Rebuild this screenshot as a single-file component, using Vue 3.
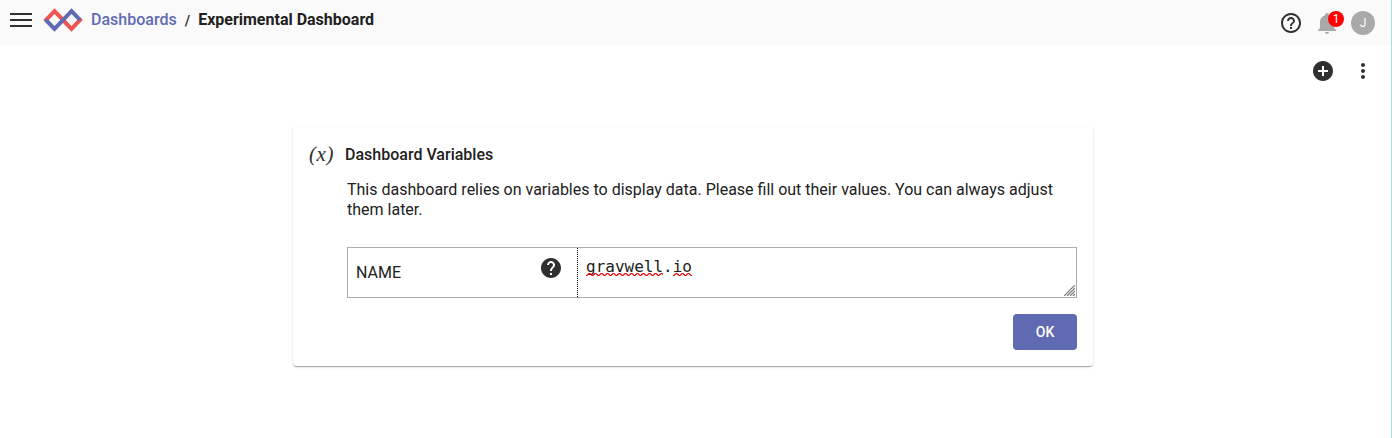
<script setup>
import { ref } from 'vue'
const value = ref('gravwell.io')
const HELP = 'M12 2C6.48 2 2 6.48 2 12s4.48 10 10 10 10-4.48 10-10S17.52 2 12 2zm1 17h-2v-2h2v2zm2.07-7.75l-.9.92C13.45 12.9 13 13.5 13 15h-2v-.5c0-1.1.45-2.1 1.17-2.83l1.24-1.26c.37-.36.59-.86.59-1.41 0-1.1-.9-2-2-2s-2 .9-2 2H8c0-2.21 1.79-4 4-4s4 1.79 4 4c0 .88-.36 1.68-.93 2.25z'
const parts = value.value.split('.')
// spelling underline: a six pixel wave repeated along the word
const wave = (n) => 'M0 2.5h1' + 'l2-2h1l2 2h1'.repeat(n)
</script>

<template>
  <div class="page">
    <header class="topbar">
      <svg class="menu" width="22" height="14" viewBox="0 0 22 14"><path d="M0 0h22v2H0zM0 6h22v2H0zM0 12h22v2H0z" /></svg>
      <svg class="logo" width="40" height="24" viewBox="0 0 40 24">
        <path d="M.2 12L11.5.3 20.5 9.6l-2.8 2.9L11.5 6l-8 8.4zM19.2 14.2l2.9-2.9 6.4 6.7L37 9l2.8 2.9-11.3 11.8z" fill="#f05553" />
        <path d="M1.3 13.2l2.8-2.9 7.4 7.7L28.5.3l9.9 10.1-2.8 2.9L28.5 6l-17 17.7z" fill="#5f6ab3" />
      </svg>
      <nav class="crumbs">
        <a class="link">Dashboards</a><span class="slash">/</span><span class="current">Experimental Dashboard</span>
      </nav>
      <div class="account">
        <svg class="help" width="24" height="24" viewBox="0 0 24 24"><path d="M11 18h2v-2h-2v2zm1-16C6.48 2 2 6.48 2 12s4.48 10 10 10 10-4.48 10-10S17.52 2 12 2zm0 18c-4.41 0-8-3.59-8-8s3.59-8 8-8 8 3.59 8 8-3.59 8-8 8zm0-14c-2.21 0-4 1.79-4 4h2c0-1.1.9-2 2-2s2 .9 2 2c0 2-3 1.75-3 5h2c0-2.25 3-2.5 3-5 0-2.21-1.79-4-4-4z" /></svg>
        <div class="bell">
          <svg width="24" height="24" viewBox="0 0 24 24"><path d="M12 23a2 2 0 0 0 2-2h-4a2 2 0 0 0 2 2zM21 19v1H3v-1l2-2v-6c0-3.1 2.03-5.83 5-6.71V4a2 2 0 0 1 4 0v.29c2.97.88 5 3.61 5 6.71v6l2 2" /></svg>
          <span class="badge">1</span>
        </div>
        <span class="avatar">J</span>
      </div>
    </header>

    <div class="actions">
      <svg width="24" height="24" viewBox="0 0 24 24"><path d="M12 2C6.48 2 2 6.48 2 12s4.48 10 10 10 10-4.48 10-10S17.52 2 12 2zm5 11h-4v4h-2v-4H7v-2h4V7h2v4h4v2z" /></svg>
      <svg width="24" height="24" viewBox="0 0 24 24"><path d="M12 8c1.1 0 2-.9 2-2s-.9-2-2-2-2 .9-2 2 .9 2 2 2zm0 2c-1.1 0-2 .9-2 2s.9 2 2 2 2-.9 2-2-.9-2-2-2zm0 6c-1.1 0-2 .9-2 2s.9 2 2 2 2-.9 2-2-.9-2-2-2z" /></svg>
    </div>

    <section class="card">
      <div class="heading"><span class="fx"><i>(</i><i>x</i><i>)</i></span><h2>Dashboard Variables</h2></div>
      <p>This dashboard relies on variables to display data. Please fill out their values. You can always adjust them later.</p>
      <div class="field">
        <div class="label">
          <span class="name">NAME</span>
          <svg width="24" height="24" viewBox="0 0 24 24"><path :d="HELP" /></svg>
        </div>
        <div class="input">
          <span class="word">{{ parts[0] }}<svg width="77" height="3"><path :d="wave(13)" /></svg></span>.<span class="word">{{ parts[1] }}<svg width="19" height="3"><path :d="wave(4)" /></svg></span>
          <svg class="grip" width="11" height="11" viewBox="0 0 11 11"><path d="M0 11L11 0M3 11l8-8M6 11l5-5M9 11l2-2" /></svg>
        </div>
      </div>
      <button class="ok">OK</button>
    </section>
  </div>
</template>

<style>
body { background: #fff; }
</style>
<style scoped>
.page { box-sizing: border-box; height: 438px; overflow: hidden; border-right: 1px solid #a0e6e0; font: 16px/20px Roboto, sans-serif; color: #212121; background: #fff; }
svg { display: block; flex: none; fill: #303030; }
.topbar { display: flex; height: 45px; background: #fafafa; box-sizing: border-box; padding: 0 16px 0 10px; }
.menu { margin-top: 13px; }
.logo { margin: 8px 0 0 11px; }
.crumbs { display: flex; margin: 10px 0 0 8px; font-weight: 500; }
.link { color: #5f6ab3; }
.slash { margin: 1px 8px 0 8px; font-size: 14px; }
.current { font-weight: 700; }
.account { display: flex; margin: 11px 0 0 auto; gap: 12px; }
.bell { position: relative; }
.bell svg { fill: #a9a9a9; }
.badge { position: absolute; left: 13px; top: 0; width: 16px; height: 16px; border-radius: 50%; background: #f00; color: #fff; font-size: 12px; line-height: 16px; text-align: center; }
.avatar { width: 24px; height: 24px; border-radius: 50%; background: #a9a9a9; color: #fff; font-size: 12px; line-height: 24px; text-align: center; }
.actions { display: flex; justify-content: flex-end; gap: 16px; padding: 14px 16px 0 0; }
.card { box-sizing: border-box; width: 800px; height: 239px; margin: 44px 0 0 293px; padding: 16px; border-radius: 4px; background: #fff; box-shadow: 0 2px 1px -1px rgba(0,0,0,.2), 0 1px 1px rgba(0,0,0,.14), 0 1px 3px rgba(0,0,0,.12); display: flex; flex-direction: column; }
.heading { display: flex; height: 24px; }
.fx { display: flex; width: 36px; font: 21px/23px "Liberation Serif", serif; color: #303030; }
.fx i + i { margin-left: .6px; }
h2 { margin: 0; font-size: 16px; line-height: 24px; font-weight: 500; }
p { margin: 13px 0 0 38px; line-height: 20px; }
.field { display: flex; box-sizing: border-box; height: 51px; margin: 27px 0 0 38px; border: 1px solid #aaa; }
.label { display: flex; box-sizing: border-box; width: 230px; border-right: 1px dotted #000; padding: 0 14px 0 8px; justify-content: space-between; }
.name { line-height: 49px; }
.label svg { margin-top: 8px; }
.input { position: relative; flex: 1; padding: 9px 8px; font: 16px/19px "DejaVu Sans Mono", monospace; }
.word { position: relative; }
.word svg { position: absolute; left: 0; top: 16px; fill: none; stroke: #e00; stroke-width: 1.1; }
.grip { position: absolute; right: 1px; bottom: 1px; fill: none; stroke: #777; stroke-width: 1.2; }
.ok { align-self: flex-end; width: 64px; height: 36px; margin-top: 16px; padding: 0; border: 0; border-radius: 4px; background: #5f6ab3; color: #fff; font: 500 14px/36px Roboto, sans-serif; }
</style>
